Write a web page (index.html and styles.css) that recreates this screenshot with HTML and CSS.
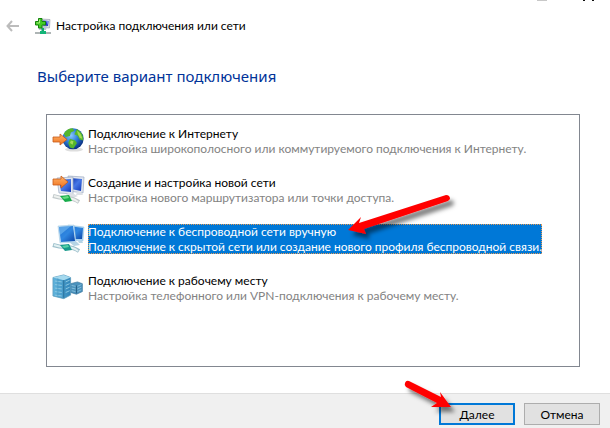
FILE: index.html
```html
<!DOCTYPE html>
<html lang="ru">
<head>
<meta charset="utf-8">
<title>Настройка подключения или сети</title>
<link rel="stylesheet" href="styles.css">
</head>
<body>
<svg width="0" height="0" class="defs" aria-hidden="true">
  <defs>
    <linearGradient id="screen" x1="0" y1="0" x2="1" y2="1"><stop offset="0" stop-color="#0a2ba6"/><stop offset=".5" stop-color="#4678e6"/><stop offset="1" stop-color="#1238b8"/></linearGradient>
    <linearGradient id="sky" x1="0" y1="0" x2="1" y2="1"><stop offset="0" stop-color="#2474d2"/><stop offset=".5" stop-color="#2f86e0"/><stop offset="1" stop-color="#0b45a8"/></linearGradient>
    <linearGradient id="orange" x1="0" y1="0" x2="0" y2="1"><stop offset="0" stop-color="#ffb469"/><stop offset="1" stop-color="#f0701c"/></linearGradient>
    <radialGradient id="globe" cx=".4" cy=".35" r=".65"><stop offset="0" stop-color="#8cc8ff"/><stop offset=".5" stop-color="#2f7fd8"/><stop offset="1" stop-color="#0b3285"/></radialGradient>
    <linearGradient id="tower" x1="0" y1="0" x2="1" y2="0"><stop offset="0" stop-color="#62b5dd"/><stop offset="1" stop-color="#3184b8"/></linearGradient>
    <filter id="shadow" x="-20%" y="-30%" width="150%" height="190%"><feDropShadow dx="4" dy="5" stdDeviation="2" flood-color="#000" flood-opacity=".5"/></filter>
  </defs>
</svg>
<main class="wizard">
  <header class="titlebar">
    <button class="back" type="button" aria-label="Назад"><svg width="14" height="12" viewBox="0 0 14 12"><path d="M13 6H2M6 1L1.500 6L6 11" fill="none" stroke="#bcbcbc" stroke-width="2"/></svg></button>
    <svg class="app-icon" width="16" height="17" viewBox="0 0 16 17">
      <path d="M6 1L15 1.500L14.500 10L6 9.500Z" fill="#d9dce5" stroke="#9299a8" stroke-width=".6"/>
      <path d="M8 2.500L13.500 3L13 8L8 7.500Z" fill="#2834c5"/><path d="M11 3L13.500 3L13 7Z" fill="#768fee"/>
      <path d="M3 8H12L11 12H4Z" fill="#b9c7d3"/><path d="M6.500 10H9V13H11V15H5V13H6.500Z" fill="#13a76d"/>
      <path d="M0 14H16V16H0Z" fill="#aeb5b5"/><path d="M5 13H11V16H5Z" fill="#13b578"/>
      <path d="M3.500 .5H7V3.500H10.500V7H7V10H3.500V7H.5V3.500H3.500Z" fill="#42cc25" stroke="#14830d"/><path d="M4.500 1.500V5H1.500" fill="none" stroke="#a4ed76"/>
    </svg>
    <h1>Настройка подключения или сети</h1>
    <svg class="window-marks" width="60" height="1" viewBox="0 0 60 1" aria-hidden="true"><path d="M0 0H10V1H0Z" fill="#c8c8c8"/><path d="M46 0H48V1H46ZM55 0H57V1H55Z" fill="#111"/></svg>
  </header>
  <form class="content">
    <h2 id="prompt">Выберите вариант подключения</h2>
    <div class="options" role="radiogroup" aria-labelledby="prompt">
      <label class="option">
        <input type="radio" name="connection">
        <svg width="34" height="32" viewBox="0 0 34 32">
          <ellipse cx="23" cy="23.500" rx="9" ry="2" fill="#dedede"/>
          <g transform="translate(4 -.5) scale(.88)"><circle cx="20.500" cy="15" r="12" fill="url(#globe)"/>
          <path d="M10 9Q14 3 20 3L22 6L18 8L17 12L12 13ZM25 4Q33 9 32 17L28 16L26 12L22 10ZM17 15L23 17L25 20L21 26L17 25L15 20Z" fill="#55b62c"/><path d="M25 6Q30 9 31 15L28 14L26 10ZM18 17L21 18L20 22L17 20Z" fill="#a3dc57"/></g>
          <path d="M2 11H9V8L16 13.500L9 19V16H2Z" fill="url(#orange)" stroke="#c65b19" stroke-width=".8"/>
        </svg>
        <span class="text"><span class="name">Подключение к Интернету</span><span class="hint">Настройка широкополосного или коммутируемого подключения к Интернету.</span></span>
      </label>
      <label class="option">
        <input type="radio" name="connection">
        <svg width="34" height="32" viewBox="0 0 34 32">
          <path d="M17 1L33 2L32 18L18 16Z" fill="#e0e5ef" stroke="#9caac1" stroke-width=".7"/><path d="M19 3L31 4L30 16L20 14Z" fill="url(#screen)"/>
          <path d="M6 3L22 2L22 19L8 18Z" fill="#dfe5ef" stroke="#9caac1" stroke-width=".7"/><path d="M8 5L20 4L20 17L10 16Z" fill="url(#screen)"/>
          <path d="M17 18H21L27 21L22 23L15 20ZM26 17H30L32 20H25Z" fill="#dce0e5"/>
          <path d="M2 21Q8 23 15 23T28 27" fill="none" stroke="#c0c8ca" stroke-width="4"/><path d="M3 21Q8 23 15 23T27 27" fill="none" stroke="#eef1ef" stroke-width="2"/><path d="M9 21L18 20L21 26L14 27Z" fill="#18ac4b"/><path d="M11 22L17 21L18 23L13 24Z" fill="#67dc83"/>
          <path d="M2 4H10V1L17 7L10 13V10H2Z" fill="url(#orange)" stroke="#c65b19" stroke-width=".8"/>
        </svg>
        <span class="text"><span class="name">Создание и настройка новой сети</span><span class="hint">Настройка нового маршрутизатора или точки доступа.</span></span>
      </label>
      <label class="option">
        <input type="radio" name="connection" checked>
        <svg width="34" height="32" viewBox="0 0 34 32">
          <path d="M17 1L33 3L32 17L18 16Z" fill="#a9d4f0" stroke="#9fc4df" stroke-width=".5"/><path d="M18 2L32 4L31 15L19 15Z" fill="url(#sky)"/>
          <path d="M7 2L23 1L25 18L9 19Z" fill="#c2e1f5" stroke="#9fc4df" stroke-width=".5"/><path d="M8 3L22 2L24 17L10 18Z" fill="url(#sky)"/><path d="M8 3L20 2L9 11Z" fill="#71b9ef" opacity=".65"/>
          <path d="M18 18L26 18L29 21L23 22ZM27 17L31 17L32 19L28 19Z" fill="#b5d4e4"/>
          <path d="M2 21Q8 23 15 23T28 27" fill="none" stroke="#9dbfcb" stroke-width="4"/><path d="M3 21Q8 23 15 23T27 27" fill="none" stroke="#e3f1f2" stroke-width="2"/><path d="M9 21L18 20L21 26L14 27Z" fill="#17998b"/><path d="M11 22L17 21L18 23L13 24Z" fill="#54d2a6"/>
        </svg>
        <span class="text"><span class="name">Подключение к беспроводной сети вручную</span><span class="hint">Подключение к скрытой сети или создание нового профиля беспроводной связи.</span></span>
        <svg class="arrow arrow-option" width="124" height="60" viewBox="0 0 124 60" aria-hidden="true"><g filter="url(#shadow)"><path d="M8 42L21 29L19 35L106 7Q110 7 110 11L108 13L24 41L26 46Z" fill="#f00"/></g></svg>
      </label>
      <label class="option">
        <input type="radio" name="connection">
        <svg width="34" height="32" viewBox="0 0 34 32">
          <g transform="translate(0 1) scale(.98 .88)"><path d="M20 11L27 9L32 11V20L26 23L20 21Z" fill="#4a91bc" stroke="#327199" stroke-width=".7"/><path d="M21 13L25 14M21 16L25 17M21 19L25 20M27 14L31 12M27 17L31 15M27 20L31 18" stroke="#94cbe2" stroke-width=".8"/><path d="M26 13V22" stroke="#235d82"/>
          <path d="M2 4L13 1L20 4V24L13 28L2 25Z" fill="url(#tower)" stroke="#5898ba" stroke-width=".8"/><path d="M2 4L13 1L20 4L13 7Z" fill="#a5d9ee"/><path d="M13 7V27" stroke="#286d96"/><path d="M4 8L11 9M4 12L11 13M4 16L11 17M4 20L11 21M4 24L11 25M15 9L19 7M15 13L19 11M15 17L19 15M15 21L19 19" stroke="#8fcae3"/><path d="M7 5V25" stroke="#4d9bc4" stroke-width=".8"/></g>
        </svg>
        <span class="text"><span class="name">Подключение к рабочему месту</span><span class="hint">Настройка телефонного или VPN-подключения к рабочему месту.</span></span>
      </label>
    </div>
  </form>
  <footer class="actions">
    <button class="action primary" type="button">Далее
      <svg class="arrow arrow-next" width="64" height="48" viewBox="0 0 64 48" aria-hidden="true"><g filter="url(#shadow)"><path d="M6 8Q7 5 10 6L42 22L41 17L52 32L32 32L38 28L7 12Q5 10 6 8Z" fill="#f00"/></g></svg>
    </button>
    <button class="action" type="button">Отмена</button>
  </footer>
</main>
</body>
</html>
```
FILE: styles.css
```css
* { box-sizing: border-box; }
body {
  margin: 0;
  background: #fff;
  color: #000;
  font: 12px/15px Lato, "Noto Sans", sans-serif;
}
h1, h2 { margin: 0; font-weight: 400; }
.defs { position: absolute; }
.wizard {
  display: flex;
  flex-direction: column;
  min-height: 100vh;
  overflow: hidden;
}
.titlebar {
  position: relative;
  display: flex;
  align-items: center;
  height: 52px;
  padding-left: 6px;
}
.back { display: flex; padding: 0; border: 0; background: none; }
.app-icon { margin: 0 5px 0 15px; }
h1 { font-size: 12px; line-height: 16px; }
.window-marks { position: absolute; top: 0; right: 13px; }
.content {
  display: flex;
  flex: 1;
  flex-direction: column;
  padding: 13px 30px 26px 37px;
}
h2 {
  color: #039;
  font: 15px/22px "Noto Sans", sans-serif;
}
.options {
  flex: 1;
  margin: 27px 0 0 9px;
  padding: 11px 4px;
  border: 1px solid #828790;
}
.option {
  position: relative;
  display: flex;
  gap: 3px;
  align-items: flex-start;
  width: fit-content;
  height: 49px;
}
.option input {
  position: absolute;
  margin: 0;
  opacity: 0;
  pointer-events: none;
}
.text { display: block; white-space: nowrap; }
.name, .hint { display: block; }
.hint { color: #838383; }
.option input:checked ~ .text {
  outline: 1px dotted #e49a55;
  outline-offset: -1px;
  background: #0078d7;
  color: #fff;
}
.option input:checked ~ .text .hint { color: #fff; }
.arrow { position: absolute; pointer-events: none; }
.arrow-option { top: -36px; left: 289px; }
.actions {
  display: flex;
  gap: 9px;
  justify-content: flex-end;
  padding: 9px 10px 3px;
  border-top: 1px solid #dfdfdf;
  background: #f0f0f0;
}
.action {
  position: relative;
  width: 76px;
  height: 22px;
  padding: 0;
  border: 1px solid #adadad;
  background: #e1e1e1;
  color: #000;
  font: inherit;
}
.primary { border: 2px solid #0078d7; }
.arrow-next { top: -30px; left: -42px; }
```
